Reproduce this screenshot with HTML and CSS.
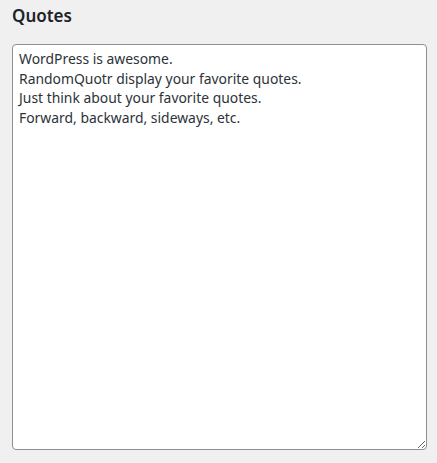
FILE: index.html
```html
<!DOCTYPE html>
<html>
<head>
<meta charset="utf-8">
<link rel="stylesheet" href="styles.css">
</head>
<body>
<div class="panel">
  <h2 class="title">Quotes</h2>
  <textarea class="quotes">WordPress is awesome.
RandomQuotr display your favorite quotes.
Just think about your favorite quotes.
Forward, backward, sideways, etc.</textarea>
</div>
</body>
</html>
```
FILE: styles.css
```css
html, body {
  margin: 0;
  padding: 0;
  background: #f0f0f1;
}
.panel {
  padding: 0 11px 0 12px;
  display: flex;
  flex-direction: column;
  font-family: "Noto Sans", "Open Sans", sans-serif;
  color: #1d2327;
}
.title {
  margin: 0;
  padding-top: 4px;
  height: 44px;
  box-sizing: border-box;
  font-size: 17px;
  font-weight: 600;
  line-height: 24px;
}
.quotes {
  box-sizing: border-box;
  width: 415px;
  height: 406px;
  margin: 0;
  padding: 4px 6px 2px;
  border: 1px solid #8c8f94;
  border-radius: 4px;
  background: #fff;
  color: #2c3338;
  font-family: "Noto Sans", "Open Sans", sans-serif;
  font-size: 13.9px;
  line-height: 19.6px;
  resize: vertical;
  outline: none;
}
```
